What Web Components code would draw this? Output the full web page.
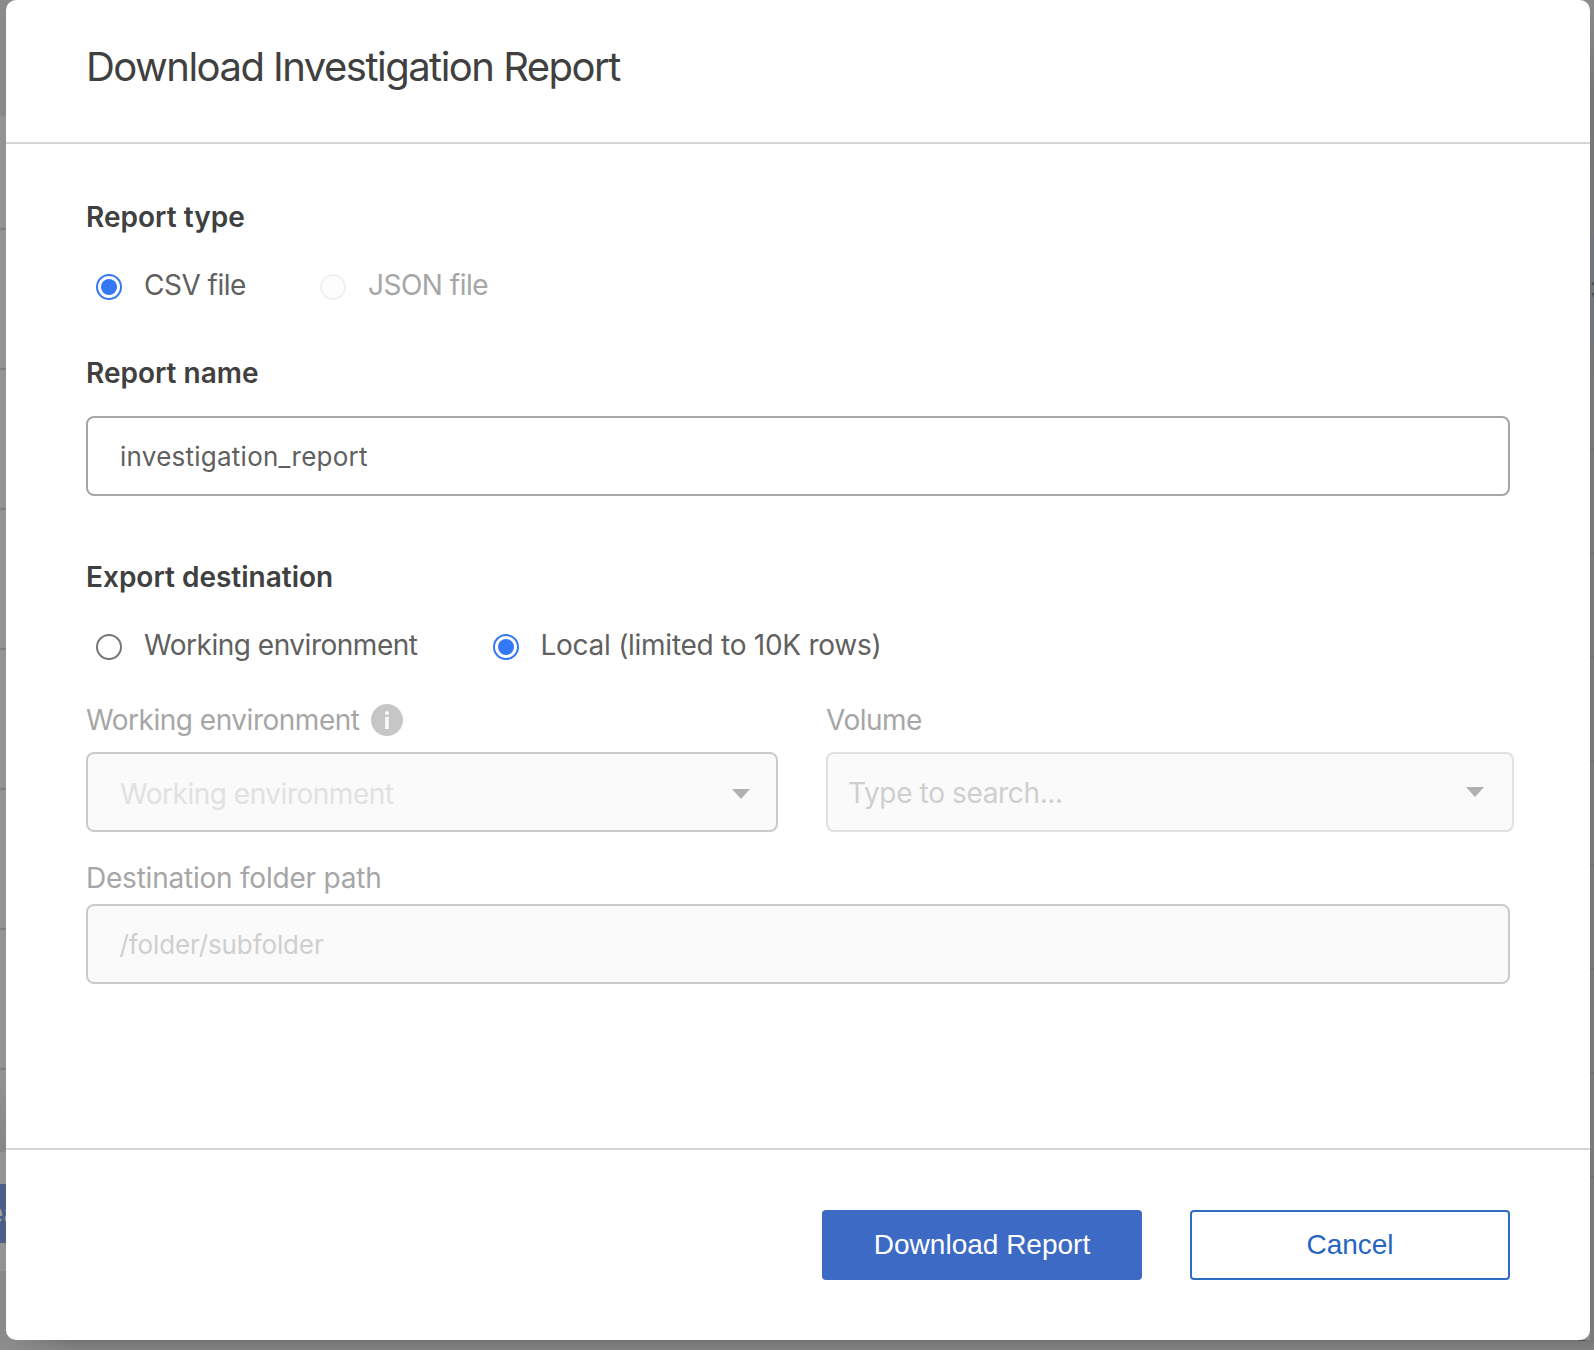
<!DOCTYPE html>
<html lang="en">
<head>
<meta charset="utf-8">
<title>Download Investigation Report</title>
<style>
html,body{margin:0;padding:0}
body{width:1594px;height:1350px;overflow:hidden;font-family:Inter,"Liberation Sans",sans-serif;color:#404040}
</style>
</head>
<body>
<app-backdrop>
  <report-modal>
    <span slot="title">Download Investigation Report</span>
    <field-heading style="--ls:.02px">Report type</field-heading>
    <radio-row style="margin-top:28px">
      <radio-option checked style="--gap:22px;--ls:-.5px;width:224px">CSV file</radio-option>
      <radio-option disabled style="--gap:22px;--ls:-.5px">JSON file</radio-option>
    </radio-row>
    <field-heading style="margin-top:48px">Report name</field-heading>
    <text-field style="margin-top:24px;--ls:.25px">investigation_report</text-field>
    <field-heading style="margin-top:60px;--ls:0px">Export destination</field-heading>
    <radio-row style="margin-top:28px">
      <radio-option style="--gap:22px;--ls:-.48px;width:397px">Working environment</radio-option>
      <radio-option checked style="--gap:21.5px;--ls:-.27px">Local (limited to 10K rows)</radio-option>
    </radio-row>
    <field-pair>
      <select-field info style="width:692px;--lls:-.48px;--ls:-.48px;--pad:32px;--shift:4px;--arrow:26px" label="Working environment">Working environment</select-field>
      <select-field style="width:688px;--lls:-.5px;--ls:-.36px;--pad:20px;--shift:1px;--line:#e1e1e1;--ink:#cfcfcf;--arrow:28px;--rise:0px" label="Volume">Type to search...</select-field>
    </field-pair>
    <field-label style="margin-top:26px;--ls:-.22px">Destination folder path</field-label>
    <text-field disabled style="margin-top:6px;--ls:-.12px;padding-left:31.5px">/folder/subfolder</text-field>
    <action-button slot="actions" primary style="--ls:0px">Download Report</action-button>
    <action-button slot="actions">Cancel</action-button>
  </report-modal>
</app-backdrop>
<script>
const define = (name, html) => customElements.define(name, class extends HTMLElement {
  constructor() {
    super();
    this.attachShadow({mode: 'open'}).innerHTML = typeof html === 'function' ? html(this) : html;
  }
});

define('app-backdrop', `
<style>
:host{display:grid;grid-template-columns:6px 1584px 4px;grid-template-rows:1340px 10px;width:1594px;height:1350px;overflow:hidden;background:#8b8b8b}
.left{display:flex;flex-direction:column;overflow:hidden;background:#939393}
.left>*{flex:none;box-sizing:border-box}
.row{height:140px;border-bottom:2px solid #818181}
.tab{height:59px;background:#4d5f86;color:#a0a0a0;font:28px/58px Inter,sans-serif;white-space:nowrap;text-indent:-13px;overflow:hidden}
.right{display:flex;flex-direction:column;background:linear-gradient(#8a8a8a,#777 90px,#7a7a7a)}
.right>*{flex:none;box-sizing:border-box}
.line{height:104px;border-bottom:2px solid #717171}
.bottom{grid-column:1/4;background:linear-gradient(90deg,#8d8d8d,#8d8d8d00 70px),linear-gradient(#747474,#838383)}
svg{display:block}
.corner{display:flex;justify-content:flex-end;padding-right:9px}
.corner i{width:7px;height:1px;background:#555}
</style>
<div class="left">
  <div style="height:116px;background:#8a8a8a"></div>
  <div class="row" style="height:114px"></div>
  <div class="row"></div><div class="row"></div><div class="row"></div><div class="row"></div><div class="row"></div>
  <div class="row" style="height:140px"></div>
  <div style="height:82px;background:linear-gradient(#939393,#868686)"></div>
  <div style="height:32px"></div>
  <div class="tab">ea</div>
  <div style="height:28px"></div>
  <div style="height:69px;background:#8a8a8a"></div>
</div>
<slot></slot>
<div class="right">
  <div style="height:235px"></div>
  <div style="height:111px;background:#71777c;padding-top:46px"><svg width="4" height="18"><path d="M1 4 4 0V4ZM1 12 4 16V12Z" fill="#484b4e"/></svg></div>
  <div class="line"></div><div class="line"></div><div class="line"></div><div class="line"></div><div class="line"></div><div class="line"></div><div class="line"></div><div class="line"></div>
</div>
<div class="bottom"><div class="corner"><i></i></div></div>`);

define('report-modal', `
<style>
:host{display:flex;flex-direction:column;width:1584px;height:1340px;background:#fff;border-radius:10px}
header{box-sizing:border-box;height:144px;padding:43px 0 0 80px;border-bottom:2px solid #d6d6d6;font-size:40px;line-height:48px;letter-spacing:-1.52px;white-space:nowrap}
main{flex:1;display:flex;flex-direction:column;padding:52px 80px 0}
footer{box-sizing:border-box;height:192px;border-top:2px solid #d6d6d6;padding:60px 80px 0;display:flex;justify-content:flex-end;align-items:flex-start;gap:48px}
</style>
<header><slot name="title"></slot></header>
<main><slot></slot></main>
<footer><slot name="actions"></slot></footer>`);

define('field-heading', `
<style>:host{display:block;height:40px;font-size:28px;font-weight:600;line-height:42px;letter-spacing:var(--ls,0);white-space:nowrap}</style><slot></slot>`);

define('field-label', `
<style>:host{display:block;height:40px;font-size:28px;line-height:40px;color:#a6a6a6;letter-spacing:var(--ls,0);white-space:nowrap}</style><slot></slot>`);

define('radio-row', `<style>:host{display:flex;height:40px;padding-left:10px}</style><slot></slot>`);

define('radio-option', `
<style>
:host{display:flex;flex:none;gap:var(--gap);font-size:28px;line-height:42px;letter-spacing:var(--ls);color:#606060;white-space:nowrap}
:host([disabled]){color:#a6a6a6}
i{box-sizing:border-box;flex:none;display:flex;align-items:center;justify-content:center;width:26px;height:26px;margin-top:10px;border:2px solid #767676;border-radius:50%;background:#fff}
:host([checked]) i{border-color:#3478f6}
:host([checked]) i::after{content:"";width:16px;height:16px;border-radius:50%;background:#3478f6}
:host([disabled]) i{border-color:#f0f0f0;background:#fdfdfd}
</style><i></i><span><slot></slot></span>`);

define('text-field', `
<style>
:host{display:block;box-sizing:border-box;height:80px;border:2px solid #a6a6a6;border-radius:8px;padding:0 32px;font-size:26px;line-height:77px;letter-spacing:var(--ls);color:#606060;white-space:nowrap}
:host([disabled]){background:#fafafa;border-color:#cbcbcb;color:#cfcfcf}
</style><slot></slot>`);

define('field-pair', `<style>:host{display:flex;gap:48px;margin:36px -4px 0 0}</style><slot></slot>`);

define('select-field', el => `
<style>
:host{display:flex;flex-direction:column;flex:none}
.label{display:flex;align-items:center;gap:11px;height:40px;margin-bottom:12px}
.box{box-sizing:border-box;display:flex;align-items:center;justify-content:space-between;height:80px;border:2px solid var(--line,#cbcbcb);border-radius:8px;background:#fafafa;padding:0 var(--arrow) 0 var(--pad,32px);color:var(--ink,#e1e1e1);font-size:28px;line-height:40px;letter-spacing:var(--ls);white-space:nowrap}
.box span{padding-top:var(--shift,0)}
.box svg{margin-top:var(--rise,4px)}
field-label{--ls:var(--lls)}
svg{display:block;flex:none}
</style>
<div class="label"><field-label>${el.getAttribute('label')}</field-label>${el.hasAttribute('info') ? `
<svg width="32" height="32" viewBox="0 0 32 32"><circle cx="16" cy="16" r="16" fill="#c6c6c6"/><circle cx="16" cy="9" r="2" fill="#fafafa"/><rect x="14.2" y="12.8" width="3.6" height="12.2" fill="#fafafa"/></svg>` : ''}</div>
<div class="box"><span><slot></slot></span><svg width="18" height="10"><path d="M0 0H18L9 10Z" fill="#b0b0b0"/></svg></div>`);

define('action-button', `
<style>
:host{display:block;box-sizing:border-box;flex:none;width:320px;height:70px;border:2px solid #2d6cc3;border-radius:4px;color:#2766c0;font-family:"Liberation Sans",Arial,sans-serif;font-size:28px;line-height:65px;letter-spacing:var(--ls,0);text-align:center;white-space:nowrap}
:host([primary]){background:#3d6ac5;border-color:#3d6ac5;color:#fff}
</style><slot></slot>`);
</script>
</body>
</html>
